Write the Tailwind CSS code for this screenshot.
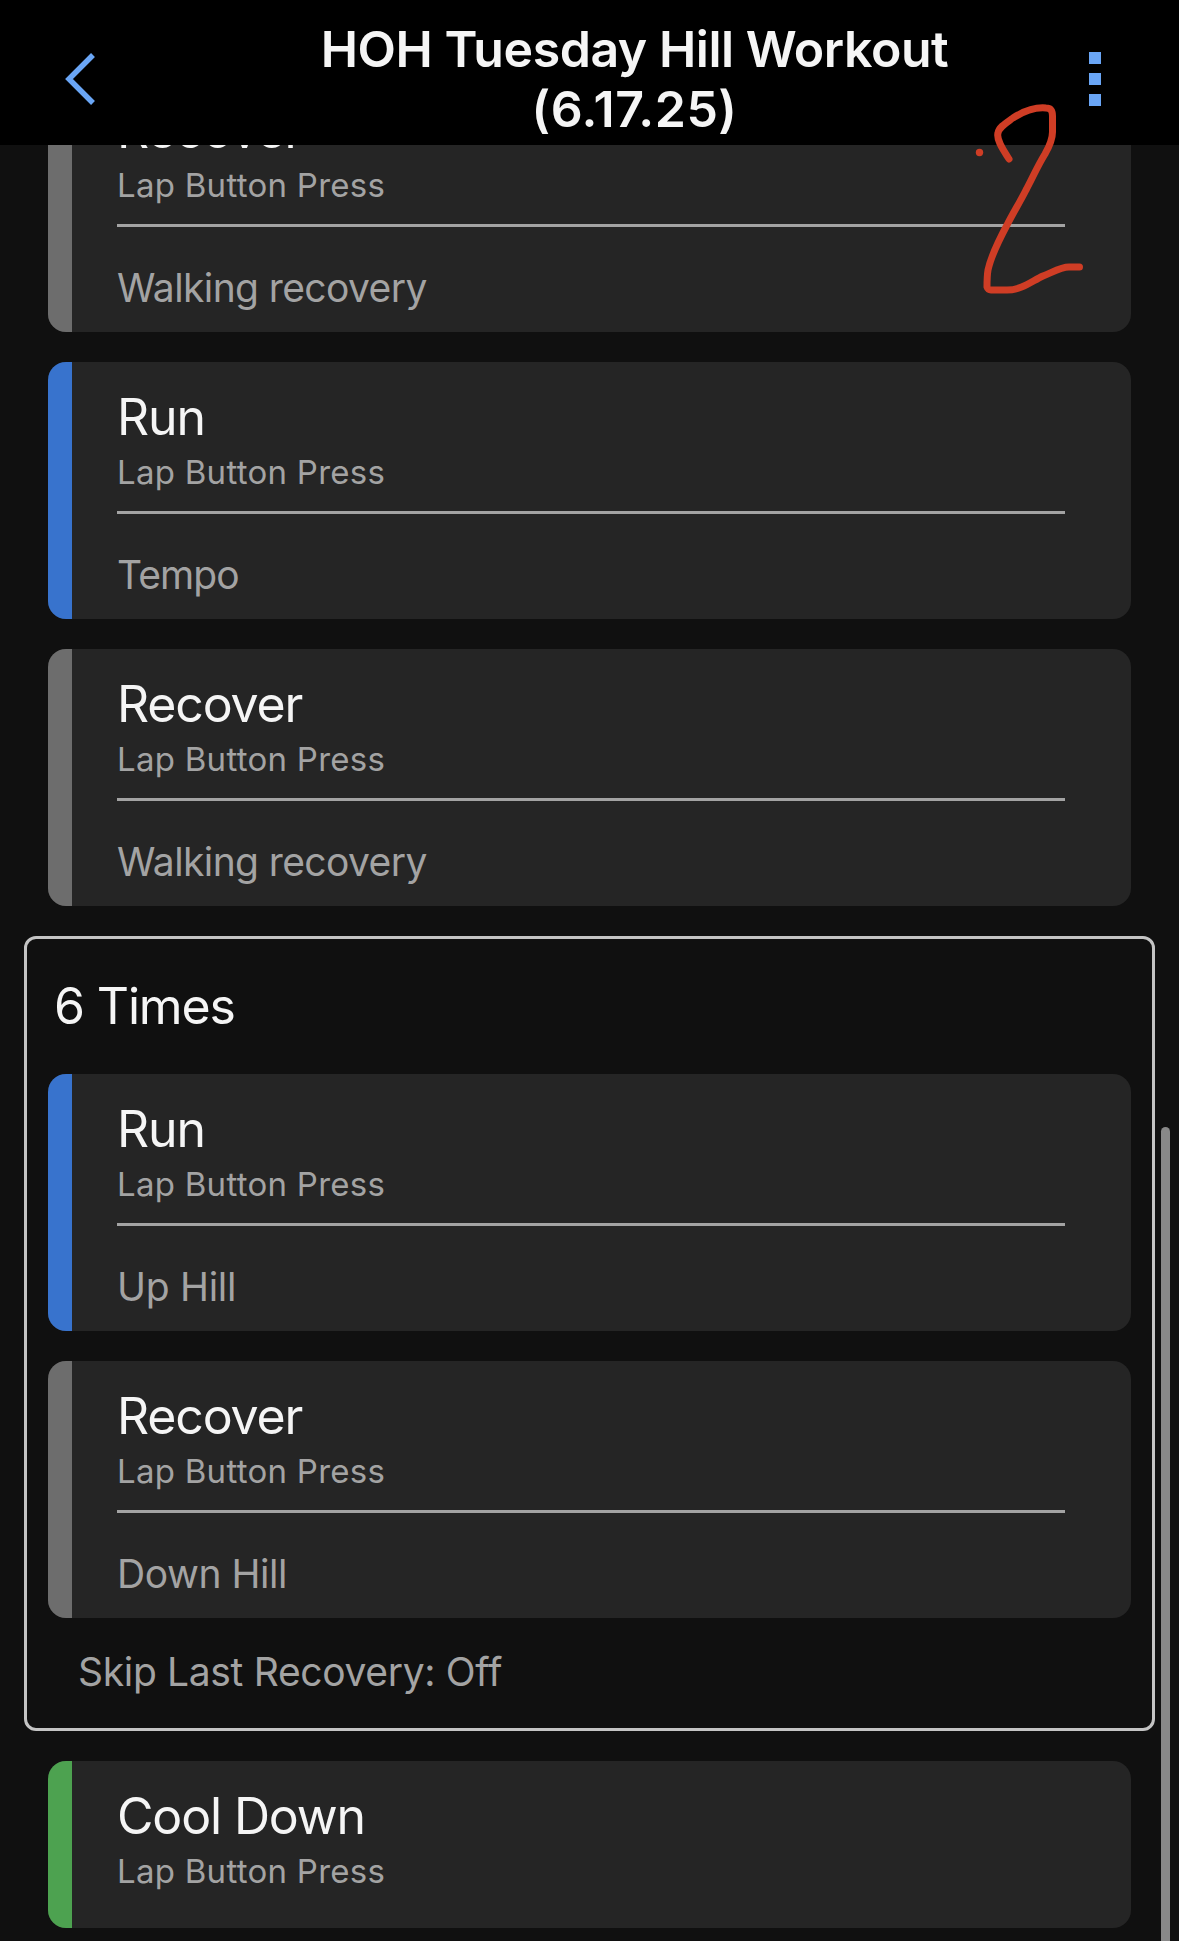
<!DOCTYPE html>
<html lang="en">
<head>
    <meta charset="UTF-8">
    <meta name="viewport" content="width=device-width, initial-scale=1.0">
    <script src="https://cdn.jsdelivr.net/npm/@tailwindcss/browser@4"></script>
    <title>HOH Tuesday Hill Workout</title>
</head>
<body class="relative flex h-[1941px] w-[1179px] flex-col overflow-hidden bg-[#101010] font-['Inter',sans-serif] text-[#f5f5f5]">

    <!-- Header -->
    <header class="z-10 flex h-[145px] shrink-0 items-start justify-between bg-black pr-[78px] pl-[64px]">
        <button type="button" aria-label="Back" class="mt-[52px]">
            <svg class="h-[54px] w-8" viewBox="0 0 32 54" fill="none" stroke="#6aa6f6" stroke-width="5.5">
                <path d="M29 3L5 27L29 51" />
            </svg>
        </button>
        <h1 class="mt-[19px] ml-[84px] w-[760px] text-center text-[50px] leading-[60px] font-semibold tracking-[-0.45px]">HOH Tuesday Hill Workout<br><span class="tracking-[0.5px]">(6.17.25)</span></h1>
        <button type="button" aria-label="More" class="mt-[52px] flex flex-col gap-[9px]">
            <span class="size-3 bg-[#6aa6f6]"></span>
            <span class="size-3 bg-[#6aa6f6]"></span>
            <span class="size-3 bg-[#6aa6f6]"></span>
        </button>
    </header>

    <!-- Workout steps, scrolled part way down -->
    <main class="-mt-[70px] flex flex-col gap-[30px] px-6">
        <section class="mx-6 flex h-[257px] overflow-hidden rounded-[18px] bg-[#252525]">
            <div class="w-6 bg-[#6d6d6d]"></div>
            <div class="mr-[66px] ml-[45px] flex-1 pt-[25px]">
                <h2 class="text-[50px] leading-[60px] tracking-[-1.15px]">Recover</h2>
                <p class="mt-[5px] text-[33px] leading-10 tracking-[0.27px] text-[#a3a3a3]">Lap Button Press</p>
                <hr class="mt-[19px] border-t-3 border-[#a3a3a3]">
                <p class="mt-9 text-[39px] leading-[49px] tracking-[-0.6px] text-[#a3a3a3]">Walking recovery</p>
            </div>
        </section>

        <section class="mx-6 flex h-[257px] overflow-hidden rounded-[18px] bg-[#252525]">
            <div class="w-6 bg-[#3873cd]"></div>
            <div class="mr-[66px] ml-[45px] flex-1 pt-[25px]">
                <h2 class="text-[50px] leading-[60px] tracking-[-1.15px]">Run</h2>
                <p class="mt-[5px] text-[33px] leading-10 tracking-[0.27px] text-[#a3a3a3]">Lap Button Press</p>
                <hr class="mt-[19px] border-t-3 border-[#a3a3a3]">
                <p class="mt-9 text-[39px] leading-[49px] tracking-[-0.9px] text-[#a3a3a3]">Tempo</p>
            </div>
        </section>

        <section class="mx-6 flex h-[257px] overflow-hidden rounded-[18px] bg-[#252525]">
            <div class="w-6 bg-[#6d6d6d]"></div>
            <div class="mr-[66px] ml-[45px] flex-1 pt-[25px]">
                <h2 class="text-[50px] leading-[60px] tracking-[-1.15px]">Recover</h2>
                <p class="mt-[5px] text-[33px] leading-10 tracking-[0.27px] text-[#a3a3a3]">Lap Button Press</p>
                <hr class="mt-[19px] border-t-3 border-[#a3a3a3]">
                <p class="mt-9 text-[39px] leading-[49px] tracking-[-0.6px] text-[#a3a3a3]">Walking recovery</p>
            </div>
        </section>

        <!-- Repeat block -->
        <div class="rounded-xl border-3 border-[#c4c4c4] px-[21px] pt-[37px] pb-8">
            <h2 class="ml-[6px] text-[50px] leading-[60px] tracking-[-1.15px]">6 Times</h2>

            <section class="mt-[38px] flex h-[257px] overflow-hidden rounded-[18px] bg-[#252525]">
                <div class="w-6 bg-[#3873cd]"></div>
                <div class="mr-[66px] ml-[45px] flex-1 pt-[25px]">
                    <h3 class="text-[50px] leading-[60px] tracking-[-1.15px]">Run</h3>
                    <p class="mt-[5px] text-[33px] leading-10 tracking-[0.27px] text-[#a3a3a3]">Lap Button Press</p>
                    <hr class="mt-[19px] border-t-3 border-[#a3a3a3]">
                    <p class="mt-9 text-[39px] leading-[49px] tracking-[-0.3px] text-[#a3a3a3]">Up Hill</p>
                </div>
            </section>

            <section class="mt-[30px] flex h-[257px] overflow-hidden rounded-[18px] bg-[#252525]">
                <div class="w-6 bg-[#6d6d6d]"></div>
                <div class="mr-[66px] ml-[45px] flex-1 pt-[25px]">
                    <h3 class="text-[50px] leading-[60px] tracking-[-1.15px]">Recover</h3>
                    <p class="mt-[5px] text-[33px] leading-10 tracking-[0.27px] text-[#a3a3a3]">Lap Button Press</p>
                    <hr class="mt-[19px] border-t-3 border-[#a3a3a3]">
                    <p class="mt-9 text-[39px] leading-[49px] tracking-[-0.45px] text-[#a3a3a3]">Down Hill</p>
                </div>
            </section>

            <p class="mt-[30px] ml-[30px] text-[39px] leading-12 tracking-[-0.33px] text-[#a3a3a3]">Skip Last Recovery: Off</p>
        </div>

        <section class="mx-6 flex h-[167px] overflow-hidden rounded-[18px] bg-[#252525]">
            <div class="w-6 bg-[#4da250]"></div>
            <div class="mr-[66px] ml-[45px] flex-1 pt-[25px]">
                <h2 class="text-[50px] leading-[60px] tracking-[-1.15px]">Cool Down</h2>
                <p class="mt-[5px] text-[33px] leading-10 tracking-[0.27px] text-[#a3a3a3]">Lap Button Press</p>
            </div>
        </section>
    </main>

    <!-- Scroll indicator -->
    <div class="absolute top-[1127px] right-[9px] bottom-0 w-[9px] rounded-t-full bg-[#888888]"></div>

    <!-- Red pen markup -->
    <svg class="absolute top-20 left-[940px] z-20 h-[230px] w-[180px]" viewBox="0 0 180 230" fill="none" stroke="#cf3d25" stroke-width="7" stroke-linecap="round" stroke-linejoin="round">
        <circle cx="39.5" cy="72.5" r="3.7" fill="#cf3d25" stroke="none" />
        <path d="M69 79C64 71 56 60 58 53C59 47 66 43 73 38C84 31 95 27 106 28C111 28 112.500 31 112.500 36V52C112.500 60 109 67 105 74C97 87 93 97 86 110C80 122 73 133 67 145C59 160 51 176 48 190C47 196 47 201 47 207Q48 210 51 210H67C82 210 92 201 103 196C113 192 121 187 129 187H139.500" />
    </svg>
</body>
</html>
